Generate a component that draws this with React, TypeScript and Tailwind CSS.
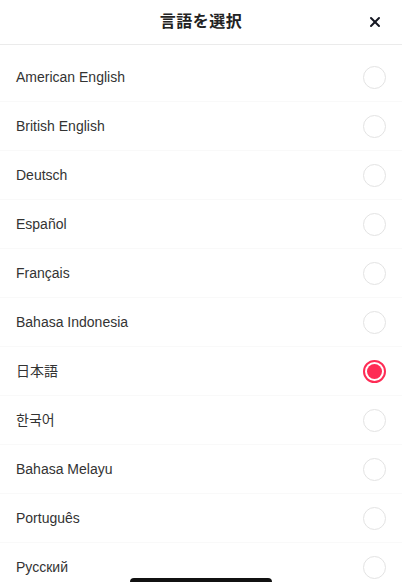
import { X } from 'lucide-react';

const languages = [
  'American English',
  'British English',
  'Deutsch',
  'Español',
  'Français',
  'Bahasa Indonesia',
  '日本語',
  '한국어',
  'Bahasa Melayu',
  'Português',
  'Русский',
];

const selected = '日本語';

export default function App() {
  return (
    <div
      className="relative h-[582px] w-full overflow-hidden bg-white text-[#161823]"
      style={{ fontFamily: '"Liberation Sans", "Noto Sans CJK JP", "Noto Sans CJK KR", sans-serif' }}
    >
      <header className="relative flex h-[45px] items-center justify-center border-b border-[#ebebeb]">
        <h1 className="text-[16px] font-bold tracking-[0.5px] text-[#222]">言語を選択</h1>
        <button type="button" className="absolute right-[19px] top-[14px] text-[#161823]" aria-label="Close">
          <X size={16} strokeWidth={3} />
        </button>
      </header>
      <ul className="pt-[8px]">
        {languages.map((lang) => (
          <LanguageRow key={lang} label={lang} active={lang === selected} />
        ))}
      </ul>
      <div className="absolute bottom-0 left-[130px] h-[4px] w-[142px] rounded-t-full bg-[#111]" />
    </div>
  );
}

function LanguageRow({ label, active }: { label: string; active: boolean }) {
  return (
    <li className="flex h-[49px] items-center justify-between border-b border-[#f9f9f9] pl-4 pr-[16px]">
      <span className="text-[14px] text-[#333]">{label}</span>
      {active ? (
        <span className="flex h-[23px] w-[23px] items-center justify-center rounded-full border-[2px] border-[#fe2c55] bg-white">
          <span className="h-[15px] w-[15px] rounded-full bg-[#fe2c55]" />
        </span>
      ) : (
        <span className="h-[23px] w-[23px] rounded-full border-[1.5px] border-[#e3e3e3]" />
      )}
    </li>
  );
}
